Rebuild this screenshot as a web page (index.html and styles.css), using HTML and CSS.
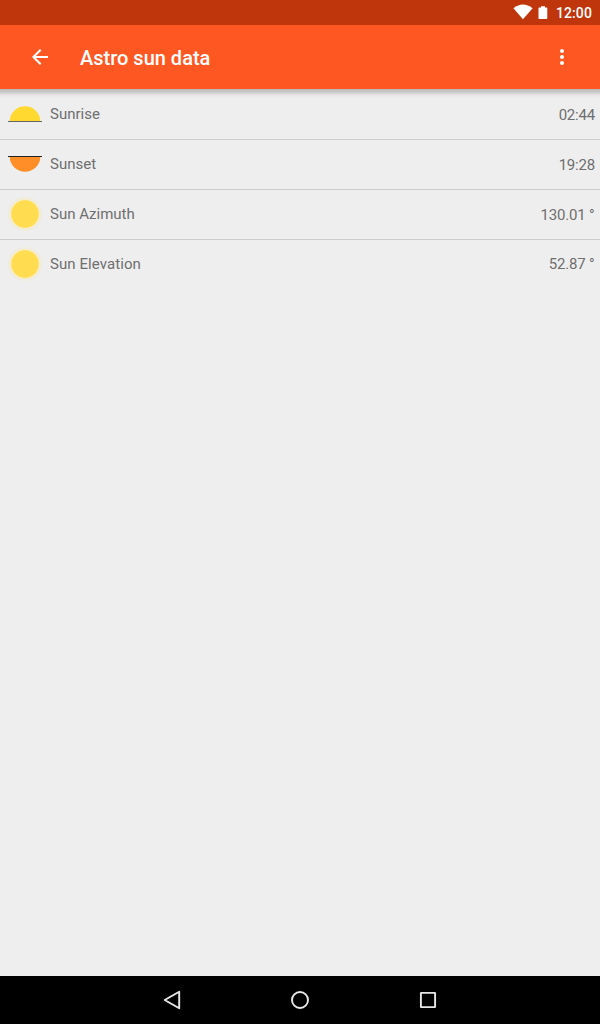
FILE: index.html
```html
<!DOCTYPE html>
<html lang="en">
<head>
<meta charset="utf-8">
<title>Astro sun data</title>
<link rel="stylesheet" href="styles.css">
</head>
<body>
<div class="screen">
  <div class="status-bar">
    <svg class="wifi" width="20" height="16" viewBox="0 0 20 16"><path d="M0.4 4.3Q10-3.2 19.6 4.3L10 15.2Z" fill="#fff"/></svg>
    <svg class="battery" width="10" height="14" viewBox="0 0 10 14"><path d="M3 .3h4v1.2h1.500q.8 0 .8.8v10q0 .8-.8.8H1.300q-.8 0-.8-.8v-10q0-.8.8-.8H3z" fill="#fff"/></svg>
    <span class="clock">12:00</span>
  </div>
  <header class="app-bar">
    <svg class="back" width="24" height="24" viewBox="0 0 24 24"><path d="M20 11H7.830l5.590-5.590L12 4l-8 8 8 8 1.410-1.410L7.830 13H20v-2z" fill="#fff"/></svg>
    <h1 class="title">Astro sun data</h1>
    <svg class="more" width="24" height="24" viewBox="0 0 24 24" fill="#fff"><circle cx="12" cy="6" r="2"/><circle cx="12" cy="12" r="2"/><circle cx="12" cy="18" r="2"/></svg>
  </header>
  <main class="list">
    <div class="row">
      <svg class="icon" width="40" height="40" viewBox="0 0 40 40"><path d="M4.700 27.500a15.300 15.300 0 0 1 30.600 0z" fill="#ffd930"/><path d="M3 27.500h34" stroke="#666"/></svg>
      <span class="label">Sunrise</span><span class="value">02:44</span>
    </div>
    <div class="row">
      <svg class="icon" width="40" height="40" viewBox="0 0 40 40"><path d="M4.700 12.500a15.300 15.300 0 0 0 30.600 0z" fill="#ff8e28"/><path d="M3 12.500h34" stroke="#222"/></svg>
      <span class="label">Sunset</span><span class="value">19:28</span>
    </div>
    <div class="row">
      <svg class="icon" width="40" height="40" viewBox="0 0 40 40"><circle cx="20" cy="20" r="17" fill="#ffdd50" opacity=".12"/><circle cx="20" cy="20" r="14.500" fill="#ffedb0"/><circle cx="20" cy="20" r="13.700" fill="#ffdc50"/></svg>
      <span class="label">Sun Azimuth</span><span class="value value-degrees">130.01 °</span>
    </div>
    <div class="row">
      <svg class="icon" width="40" height="40" viewBox="0 0 40 40"><circle cx="20" cy="20" r="17" fill="#ffdd50" opacity=".12"/><circle cx="20" cy="20" r="14.500" fill="#ffedb0"/><circle cx="20" cy="20" r="13.700" fill="#ffdc50"/></svg>
      <span class="label label-wide">Sun Elevation</span><span class="value value-degrees">52.87 °</span>
    </div>
  </main>
  <nav class="nav-bar">
    <svg width="24" height="24" viewBox="0 0 24 24"><path d="M19.200 3.700v16.600L4.700 12z"/></svg>
    <svg width="24" height="24" viewBox="0 0 24 24"><circle cx="12" cy="12" r="8"/></svg>
    <svg width="24" height="24" viewBox="0 0 24 24"><rect x="4.900" y="4.900" width="14.200" height="14.200" rx=".3"/></svg>
  </nav>
</div>
</body>
</html>
```
FILE: styles.css
```css
body {
  margin: 0;
  font-family: Roboto, "Liberation Sans", sans-serif;
}

.screen {
  display: flex;
  flex-direction: column;
  height: 1024px;
  background: #eee;
}

.status-bar {
  display: flex;
  justify-content: flex-end;
  align-items: flex-start;
  box-sizing: border-box;
  height: 25px;
  padding: 4px 8px 0 0;
  background: #bf360c;
  color: #fff;
}

.battery {
  margin: 2px 7.5px 0 5.5px;
}

.clock {
  font-size: 14px;
  font-weight: 500;
  line-height: 18px;
  letter-spacing: 0.1px;
}

.app-bar {
  display: flex;
  align-items: center;
  box-sizing: border-box;
  height: 64px;
  padding: 0 26px 0 28px;
  background: #ff5722;
  color: #fff;
}

.title {
  flex: 1;
  margin: 2px 0 0 28px;
  font-size: 20px;
  font-weight: 500;
  line-height: 24px;
}

.list {
  flex: 1;
  padding-top: 1px;
  background: linear-gradient(#b9b9b9, #cacaca 3px, #e4e4e4 6px, #eee 9px);
}

.row {
  display: flex;
  align-items: flex-start;
  box-sizing: border-box;
  height: 50px;
  padding: 4px 5px 0;
  border-bottom: 1px solid #ccc;
  color: #6f6f6f;
  font-size: 15px;
  line-height: 18px;
}

.row:last-child {
  border-bottom: 0;
}

.label {
  flex: 1;
  margin: 11px 0 0 5px;
}

.label-wide {
  letter-spacing: 0.08px;
}

.value {
  margin-top: 12px;
  letter-spacing: -0.2px;
}

.value-degrees {
  margin-right: 0.7px;
}

.row:last-child .value {
  margin-top: 11px;
}

.nav-bar {
  display: flex;
  justify-content: center;
  align-items: center;
  gap: 104px;
  height: 48px;
  background: #000;
  fill: none;
  stroke: #e8e8e8;
  stroke-width: 1.9;
  stroke-linejoin: round;
}
```
